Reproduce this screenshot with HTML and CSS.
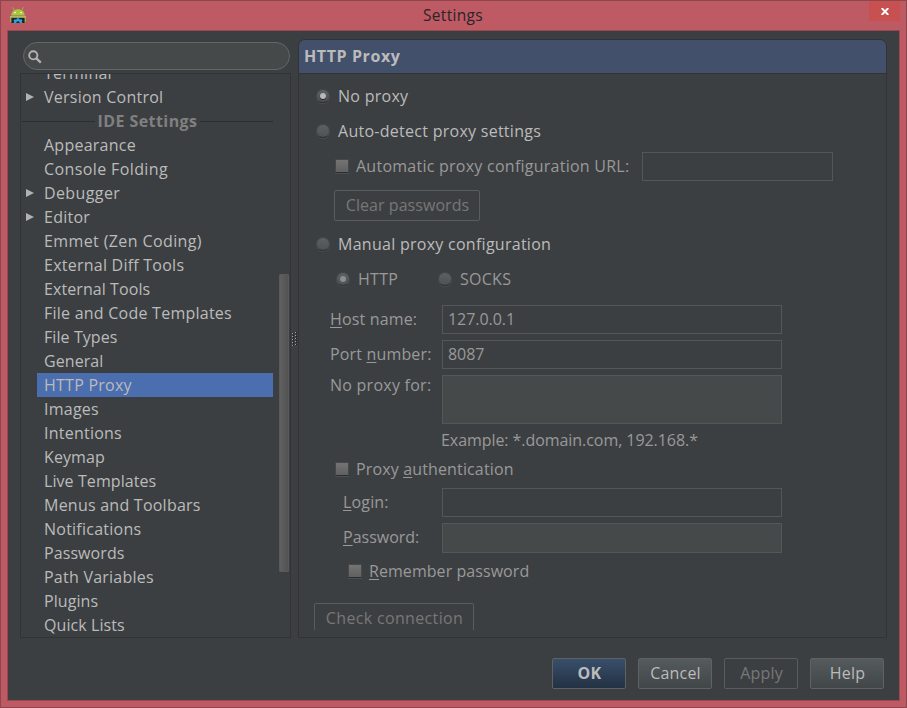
FILE: index.html
```html
<!DOCTYPE html>
<html lang="en">
<head>
<meta charset="utf-8">
<title>Settings</title>
<link rel="stylesheet" href="styles.css">
</head>
<body>
<div class="window">
  <header class="titlebar">
    <svg class="app-icon" width="16" height="17" viewBox="0 0 16 17">
      <path d="M2.5 .3l2 3M13.5 .3l-2 3" stroke="#b0a94e" stroke-width="1"/>
      <path d="M1.2 8.6C1.2 0 14.8 0 14.8 8.6z" fill="#a4ca39"/>
      <circle cx="5" cy="5.6" r=".8" fill="#fff"/><circle cx="11" cy="5.6" r=".8" fill="#fff"/>
      <path d="M0 9.3h16v1.5H0z" fill="#b9d66a"/><path d="M0 10.5h1.5v4.5H0zM14.5 10.5h1.5v4.5h-1.5z" fill="#8db73b"/>
      <path d="M1.5 10.8h13V16h-13z" fill="#17242c"/>
      <path d="M3.5 16l.8-1.3-.8-1.4 1.3-1 1.4.5.8-1.5h2l.8 1.5 1.4-.5 1.3 1-.8 1.4.8 1.3H9.8a1.8 1.8 0 0 0-3.6 0z" fill="#2ba6de"/>
    </svg>
    <h1 class="title">Settings</h1>
    <button class="close" aria-label="Close"><svg width="8" height="7" viewBox="0 0 8 7"><path d="M.7 0l6.6 7M7.3 0L.7 7" stroke="#fff" stroke-width="1.9"/></svg></button>
  </header>
  <div class="client">
    <div class="panes">
      <aside class="side">
        <div class="search"><svg width="14" height="14" viewBox="0 0 14 14"><circle cx="5.3" cy="5.3" r="4.1" fill="none" stroke="#b2b3b3" stroke-width="1.9"/><path d="M8.3 8.3l4.5 4.3" stroke="#b2b3b3" stroke-width="2.3"/></svg></div>
        <div class="tree">
          <ul class="rows">
            <li>Terminal</li>
            <li class="branch">Version Control</li>
            <li class="group"><b>IDE Settings</b></li>
            <li>Appearance</li>
            <li class="loose">Console Folding</li>
            <li class="branch loose">Debugger</li>
            <li class="branch">Editor</li>
            <li class="loose">Emmet (Zen Coding)</li>
            <li>External Diff Tools</li>
            <li class="tight">External Tools</li>
            <li>File and Code Templates</li>
            <li class="tight">File Types</li>
            <li class="tight">General</li>
            <li class="selected">HTTP Proxy</li>
            <li>Images</li>
            <li>Intentions</li>
            <li class="tight">Keymap</li>
            <li class="tight">Live Templates</li>
            <li>Menus and Toolbars</li>
            <li>Notifications</li>
            <li class="tight">Passwords</li>
            <li>Path Variables</li>
            <li class="tight">Plugins</li>
            <li class="tight">Quick Lists</li>
          </ul>
          <div class="thumb"></div>
        </div>
      </aside>
      <div class="splitter"><svg width="5" height="15" viewBox="0 0 5 15"><path d="M1.5 1v14M4.5 0v14" stroke="#1e2021" stroke-dasharray="1 1"/><path d="M.5 1v14M3.5 0v14" stroke="#a0a2a3" stroke-dasharray="1 2"/></svg></div>
      <main class="detail">
        <h2 class="heading">HTTP Proxy</h2>
        <div class="form">
          <label class="line r1"><i class="radio on"></i>No proxy</label>
          <label class="line r2"><i class="radio"></i>Auto-detect proxy settings</label>
          <div class="line r3 dim"><i class="check"></i><span class="url-label">Automatic proxy configuration URL:</span><span class="input url"></span></div>
          <button class="flat clear">Clear passwords</button>
          <label class="line r2"><i class="radio"></i>Manual proxy configuration</label>
          <div class="line r4 dim"><i class="radio on"></i><span class="http">HTTP</span><i class="radio"></i>SOCKS</div>
          <div class="field f1"><span class="name"><u>H</u>ost name:</span><span class="input">127.0.0.1</span></div>
          <div class="field f2"><span class="name">Port <u>n</u>umber:</span><span class="input">8087</span></div>
          <div class="field f2 tall"><span class="name">No proxy for:</span><span class="input area"></span></div>
          <div class="example">Example: *.domain.com, 192.168.*</div>
          <div class="line r5 dim"><i class="check"></i><span>Proxy <u>a</u>uthentication</span></div>
          <div class="field f3"><span class="name"><u>L</u>ogin:</span><span class="input"></span></div>
          <div class="field f4"><span class="name"><u>P</u>assword:</span><span class="input secret"></span></div>
          <div class="line r6 dim"><i class="check"></i><span><u>R</u>emember password</span></div>
          <button class="flat test">Check connection</button>
        </div>
      </main>
    </div>
    <footer class="actions">
      <button class="ok">OK</button>
      <button>Cancel</button>
      <button class="flat">Apply</button>
      <button>Help</button>
    </footer>
  </div>
</div>
</body>
</html>
```
FILE: styles.css
```css
* { box-sizing: border-box; }
body { margin: 0; font: 16px/24px "Open Sans", "Noto Sans", sans-serif; color: #bbb; }
h1, h2, ul { margin: 0; padding: 0; list-style: none; }
button { font: inherit; color: inherit; padding: 0 0 2px 1px; }
u { text-decoration: underline 1px; text-underline-offset: 2px; text-decoration-skip-ink: none; }

.window { width: 907px; height: 708px; display: flex; flex-direction: column; background: #bd5a64; border: 1px solid #8e464d; padding: 0 6px 6px; }
.titlebar { height: 29px; display: grid; grid-template-columns: 46px 1fr 47px; align-items: start; }
.app-icon { margin: 6px 0 0 3px; }
.title { font-size: 15.5px; font-weight: 400; line-height: 29px; text-align: center; letter-spacing: .3px; color: #2a2426; }
.close { width: 31px; height: 20px; margin-left: 16px; padding: 0; border: 0; background: #c75050; display: flex; align-items: center; justify-content: center; }
.client { flex: 1; border: 1px solid #9b4851; background: #3c3f41; padding: 8px 12px 0; display: flex; flex-direction: column; }
.panes { display: flex; height: 599px; }

.side { width: 271px; padding-top: 3px; display: flex; flex-direction: column; }
.search { height: 28px; margin: 0 1px 3px 3px; border: 1px solid #646667; border-radius: 14px; background: #45494a; padding: 7px 0 0 4px; display: flex; }
.tree { flex: 1; min-height: 0; overflow: hidden; border: 1px solid #313335; display: flex; padding-right: 1px; }
.rows { flex: 1; margin: -13px 0 0 16px; }
.rows li { height: 24px; padding-left: 7px; width: 236px; white-space: nowrap; letter-spacing: .24px; }
.rows .loose { letter-spacing: .39px; }
.rows .tight { letter-spacing: .08px; }
.rows .selected { background: #4b6eaf; }
.rows .branch { padding-left: 0; margin-left: -11px; display: flex; align-items: center; }
.rows .branch::before { content: ""; border: solid transparent; border-width: 4.5px 0 4.5px 8px; border-left-color: #afb1b3; margin-right: 10px; }
.rows .group { display: flex; align-items: center; gap: 3px; color: #808080; width: 251px; margin-left: -15px; padding: 0; letter-spacing: .42px; }
.group::before, .group::after { content: ""; height: 1px; background: #2b2d2e; flex: 1; }
.thumb { width: 10px; height: 298px; margin-top: 200px; background: linear-gradient(90deg, #606060, #525252); border: 1px solid #5a5a5a; border-radius: 1px; }
.splitter { width: 7px; display: flex; align-items: center; padding: 2px 0 0 1px; }

.detail { width: 589px; border: 1px solid #313335; border-radius: 7px 7px 0 0; overflow: hidden; }
.heading { height: 34px; padding-left: 5px; font-size: 16px; line-height: 33px; letter-spacing: .6px; background: #43506c; border-bottom: 1px solid #313335; }
.form { height: 556px; overflow: hidden; padding-left: 15px; display: flex; flex-direction: column; align-items: flex-start; }
.line { height: 24px; display: flex; align-items: center; flex: none; white-space: nowrap; letter-spacing: .27px; }
.dim, .field, .example { color: #999; }
.radio { flex: none; width: 14px; height: 14px; margin: 0 8px 0 2px; border-radius: 50%; background: linear-gradient(#5c6062, #4e5254); border: 1px solid #46494b; border-bottom-color: #2e3132; box-shadow: 0 1px #4a4d4f; display: flex; align-items: center; justify-content: center; }
.radio.on::after { content: ""; width: 6px; height: 6px; border-radius: 50%; background: #b8b8b8; box-shadow: 0 1px 1px #222; }
.dim .radio.on::after { background: #8b8d8e; box-shadow: none; }
.check { flex: none; width: 14px; height: 14px; margin: -1px 7px 0 0; background: linear-gradient(#747474, #606060); border: 1px solid #464849; border-bottom-color: #2b2d2e; box-shadow: 0 1px #4c4f51; }
.r1 { margin-top: 10px; }
.r2 { margin-top: 11px; }
.r3 { margin: 9px 0 0 21px; height: 29px; }
.url-label { width: 286px; margin-top: -2px; letter-spacing: .25px; }
.r4 { margin: 11px 0 0 20px; }
.http { width: 78px; }
.r5 { margin: 5px 0 0 21px; letter-spacing: .14px; }
.r6 { margin: 6px 0 0 34px; letter-spacing: .06px; }
.input { width: 340px; height: 29px; border: 1px solid #555657; padding-left: 5px; line-height: 27px; letter-spacing: -.04px; }
.url { width: 191px; }
.field { display: flex; flex: none; height: 29px; margin-left: 16px; line-height: 28px; letter-spacing: .16px; }
.name { width: 112px; white-space: nowrap; }
.f1 { margin-top: 14px; }
.f2 { margin-top: 6px; }
.tall { height: 49px; line-height: 20px; letter-spacing: .25px; }
.area { height: 49px; background: #45494a; }
.example { margin: 4px 0 0 127px; letter-spacing: -.06px; }
.f3, .f4 { margin: 7px 0 0 29px; }
.f3 .name, .f4 .name { width: 99px; }
.f4 { margin-top: 6px; height: 30px; letter-spacing: 0; }
.secret { height: 30px; background: #45494a; }
.clear, .test { flex: none; height: 31px; width: 146px; margin: 9px 0 0 20px; letter-spacing: .06px; }
.test { width: 160px; margin: 20px 0 0; letter-spacing: .34px; }
.flat, .actions .flat { background: none; border: 1px solid #5a5d5e; border-radius: 2px; color: #777; }

.actions { display: flex; justify-content: flex-end; gap: 12px; padding: 20px 3px 0 0; }
.actions button { width: 74px; height: 31px; border: 1px solid #5e6263; border-radius: 2px; letter-spacing: .2px; background: linear-gradient(#555a5c, #414648); }
.actions .ok { background: linear-gradient(#384f6b, #233143); font-weight: 700; }
```
